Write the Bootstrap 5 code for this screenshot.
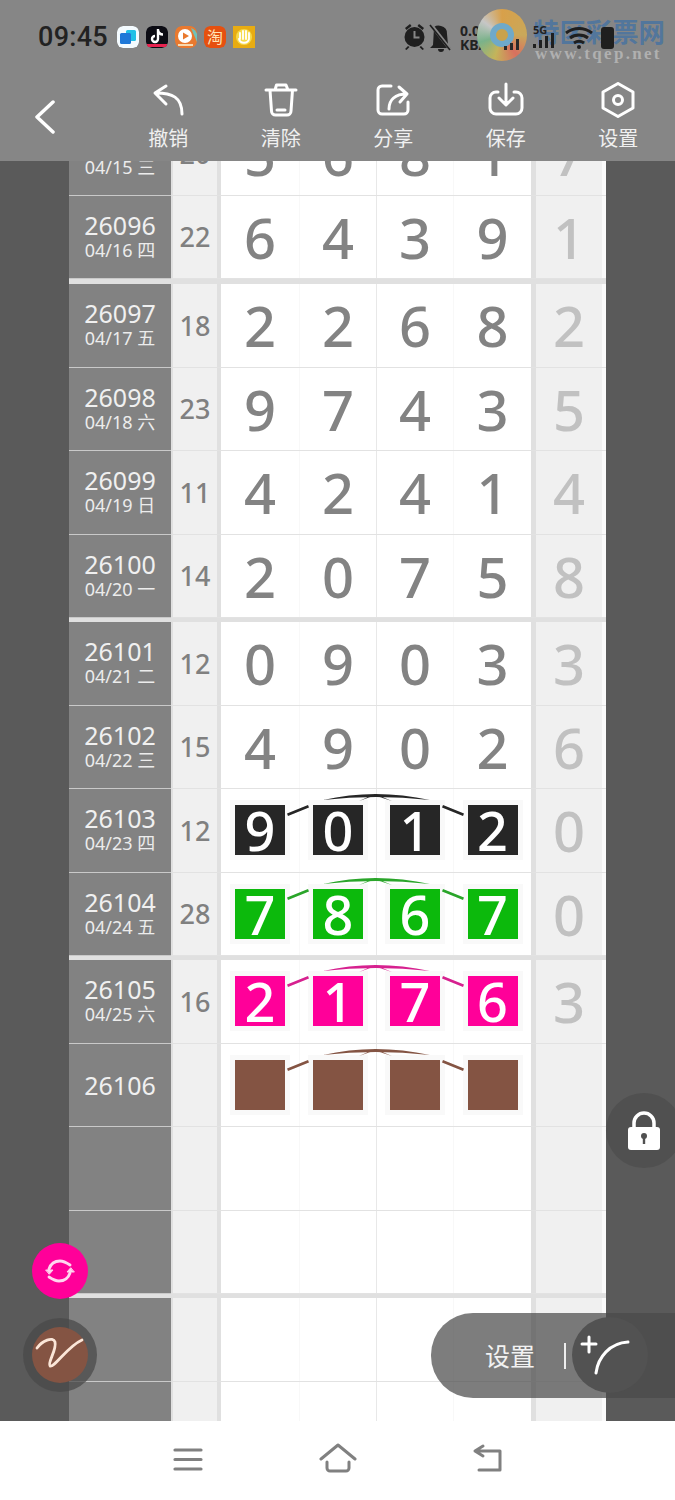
<!DOCTYPE html>
<html lang="zh-CN">
<head>
<meta charset="utf-8">
<link href="https://cdn.jsdelivr.net/npm/bootstrap@5.3.0/dist/css/bootstrap.min.css" rel="stylesheet">
<style>
html,body{margin:0;background:#fff}
.pg{width:675px;height:1500px;font-family:"Noto Sans","Noto Sans CJK SC",sans-serif;overflow:hidden}
.hdr{height:161px;background:#868686}
.st{height:74px;padding-left:38px}
.clock{font-family:Roboto,sans-serif;font-weight:500;font-size:27px;letter-spacing:.3px;color:#222;width:79px}
.apps{gap:7px}
.app{width:22px;height:22px;border-radius:6px;display:block}
.ric{left:403px;top:22px;width:214px;height:30px}
.rate{left:460px;top:24px;font:700 14px/14px "Noto Sans",sans-serif;color:#222;text-align:left}
.five{left:533px;top:24px;font:700 11px/12px "Noto Sans",sans-serif;color:#222}
.logo{left:477px;top:9px;width:50px;height:52px;border-radius:50%;background:conic-gradient(#d8a04a,#c9a85a 25%,#d8705e 40%,#c4b45a 55%,#7ab28a 70%,#c6c6c6 85%,#d8a04a);filter:blur(.6px)}
.logo::after{content:"";position:absolute;left:13px;top:14px;width:24px;height:24px;border-radius:50%;border:6px solid #6fa9c9;background:#c9a24b}
.gb{left:503px;top:38px;width:20px;height:12px}
.wm{left:533px;top:13px;font:700 26.4px/36px "Noto Sans CJK SC",sans-serif;color:rgba(62,112,165,.72);white-space:nowrap}
.wu{left:535px;top:44px;font:700 17px/20px "Liberation Serif",serif;color:rgba(205,205,205,.6);letter-spacing:2.3px;white-space:nowrap}
.nv{height:87px;padding-top:8px}
.bk{width:112px;padding-left:33px;padding-top:18px}
.ni{width:112.5px}
.ni svg,.bk svg{display:block}
.nl{font:400 20px/24px "Noto Sans CJK SC",sans-serif;color:#f0f0f0;margin-top:8px}
.bd{height:1260px;background:#5a5a5a;padding:0 69px}
.lr{height:83.5px;border-bottom:1px solid #e2e2e2}
.lg{border-bottom:4.5px solid #e0e0e0}
.first{margin-top:-48px;border-bottom-width:5.5px}
.first .lr{height:83px}
.cid{width:102px;background:#828282;color:#f0f0f0;border-bottom:1px solid #c9c9c9;margin-bottom:-1px}
.cno{font-size:25px;line-height:30px;margin-top:-2px}
.cno:only-child{margin-top:0}
.cdt{font-size:18px;line-height:24px;margin-top:-2px;color:#ececec}
.csm{width:50px;padding-top:1px;background:#f0f0f0;border-left:2px solid #e0e0e0;border-right:4px solid #e0e0e0;color:#808080;font-size:27px;font-weight:500}
.cds{width:310px;background:#fff}
.cd{width:77px;font-size:56px;font-weight:500;line-height:1;color:#838383;border-right:1px solid #f8f8f8}
.cd:first-child{width:79px}
.cd:nth-child(2){border-right-color:#e8e8e8}
.cd:nth-child(4){border-right:0}
.cla{width:75px;background:#f0f0f0;border-left:5px solid #e0e0e0;border-right:4px solid #fafafa;color:#c1c1c1;font-size:56px;font-weight:500;line-height:1}
.tile{width:50px;height:50px;color:#fff;font-size:54px;font-weight:500;line-height:50px;box-shadow:0 0 0 5px #f9f9f9}
.tk{background:#262626}.tg{background:#0cb90c}.tp{background:#ff0099}.tb{background:#845443}
.arc{left:0;top:0;width:310px;height:83px;pointer-events:none}
.botm{height:79px;background:#fff}
.bi{width:150px;padding-top:22px}
.lock{left:606px;top:1093px;width:76px;height:75px;border-radius:50%;background:#505050}
.ref{left:32px;top:1243px;width:56px;height:56px;border-radius:50%;background:#ff0099}
.sig{left:23px;top:1318px;width:74px;height:74px;border-radius:50%;background:rgba(73,73,73,.75)}
.sigi{width:56px;height:56px;border-radius:50%;background:#845443}
.pill{left:431px;top:1313px;width:244px;height:85px;border-radius:42px 0 0 42px;background:rgba(73,73,73,.715);padding-left:54px;color:#f2f2f2;font:400 25px/1 "Noto Sans CJK SC",sans-serif}
.dv{width:2px;height:26px;background:#eee;margin-left:29px}
.pc{left:141px;top:4px;width:76px;height:76px;border-radius:50%;background:#525252}
</style>
</head>
<body>
<div class="pg position-relative">
 <div class="hdr position-relative">
  <div class="st d-flex align-items-center">
   <div class="clock">09:45</div>
   <div class="apps d-flex">
    <svg class="app" viewBox="0 0 22 22"><rect width="22" height="22" rx="6" fill="#f4fbff"/><rect x="9" y="4" width="10" height="11" rx="1.5" fill="#21c0e6"/><rect x="3" y="7" width="11" height="11" rx="1.5" fill="#1e78d8"/></svg>
    <svg class="app" viewBox="0 0 22 22"><rect width="22" height="22" rx="6" fill="#0c0c14"/><path d="M12 3v10a3 3 0 1 1-3-3M12 4c.5 3 2.500 4.500 5 4.500" fill="none" stroke="#fff" stroke-width="2.400"/><rect x="1" y="18" width="20" height="3" fill="#e8224f"/></svg>
    <svg class="app" viewBox="0 0 22 22"><rect width="22" height="22" rx="7" fill="#e9792f"/><path d="M16 2a9 9 0 0 1 6 6v8z" fill="#6fc2ba"/><circle cx="10" cy="10" r="7" fill="#fff"/><path d="M8 6.500l6 3.500-6 3.500z" fill="#e9792f"/><rect x="3" y="18" width="15" height="2" fill="#f7d9b0"/></svg>
    <svg class="app" viewBox="0 0 22 22"><rect width="22" height="22" rx="6" fill="#e6500f"/><text x="11" y="17" text-anchor="middle" font-family="Noto Sans CJK SC" font-size="16" fill="#ffe3b5">淘</text></svg>
    <svg class="app" style="border-radius:0" viewBox="0 0 22 22"><rect width="22" height="22" fill="#e8ac12"/><circle cx="11" cy="11" r="8" fill="#f6d94a"/><path d="M7 7v6M10 5v8M13 5v8M16 7v6M6 13c1 5 9 5 10 0" fill="none" stroke="#fff" stroke-width="1.800" stroke-linecap="round"/></svg>
   </div>
  </div>
  <div class="rate position-absolute">0.01<br>KB/s</div>
  <div class="logo position-absolute"></div>
  <svg class="gb position-absolute" viewBox="0 0 20 12" fill="#2a2a2a"><rect x="1" y="8" width="3" height="4"/><rect x="7" y="5" width="3" height="7"/><rect x="13" y="1" width="3" height="11"/></svg>
  <div class="wm position-absolute">特区彩票网</div>
  <div class="wu position-absolute">www.tqep.net</div>
  <svg class="ric position-absolute" viewBox="0 0 214 30">
   <g fill="#1f1f1f">
    <circle cx="11.500" cy="15" r="10"/><path d="M2 6l5-4 1.500 2-5 4zM21 6l-5-4-1.500 2 5 4zM5 24l-3 3 1.500 1 3-3zM18 24l3 3-1.500 1-3-3z"/>
    <path d="M31 5a8 8 0 0 1 7-1 7 7 0 0 1 6 8l1 11 3 3H27l3-3 .5-8zM35 27h6a3 3 0 0 1-6 0z"/>
    <rect x="130" y="22" width="3" height="4"/><rect x="136" y="18" width="3" height="8"/><rect x="142" y="14" width="3" height="12"/><rect x="148" y="11" width="3" height="15"/>
    <rect x="198" y="5" width="13" height="22" rx="3"/>
   </g>
   <path d="M29 4l18 23" stroke="#868686" stroke-width="3.500"/><path d="M27 3l20 25" stroke="#1f1f1f" stroke-width="1.600"/>
   <path d="M163 11c8-6 18-6 26 0M167 16c5-4 13-4 18 0M171 21c3-2 7-2 10 0" fill="none" stroke="#1f1f1f" stroke-width="3"/><circle cx="176" cy="25" r="2" fill="#1f1f1f"/>
   <path d="M11.500 9v6.500h5" fill="none" stroke="#868686" stroke-width="2"/>
  </svg>
  <div class="five position-absolute">5G</div>
  <div class="nv d-flex">
   <div class="bk"><svg width="24" height="36" viewBox="0 0 24 36" fill="none" stroke="#fff" stroke-width="3.500" stroke-linecap="round" stroke-linejoin="round"><path d="M20 2 4 17l16 15"/></svg></div>
   <div class="ni d-flex flex-column align-items-center"><svg width="36" height="36" viewBox="0 0 36 36" fill="none" stroke="#fff" stroke-width="3" stroke-linecap="round" stroke-linejoin="round"><path d="M16 4 5 11l11 11M6 11c16 0 26 4 26 21"/></svg><div class="nl">撤销</div></div>
   <div class="ni d-flex flex-column align-items-center"><svg width="36" height="36" viewBox="0 0 36 36" fill="none" stroke="#fff" stroke-width="3" stroke-linecap="round" stroke-linejoin="round"><path d="M3 8h30M12 8l1.500-5H23l2 5M7 8l1.500 21a4 4 0 0 0 4 4H24a4 4 0 0 0 4-4l1.500-21M14 28h8"/></svg><div class="nl">清除</div></div>
   <div class="ni d-flex flex-column align-items-center"><svg width="36" height="36" viewBox="0 0 36 36" fill="none" stroke="#fff" stroke-width="3" stroke-linecap="round" stroke-linejoin="round"><path d="M16 4H7a4 4 0 0 0-4 4v20a4 4 0 0 0 4 4h22a4 4 0 0 0 4-4v-8M14 27c0-9 6-15 18-15M24 5l8 7-7 8"/></svg><div class="nl">分享</div></div>
   <div class="ni d-flex flex-column align-items-center"><svg width="36" height="36" viewBox="0 0 36 36" fill="none" stroke="#fff" stroke-width="3" stroke-linecap="round" stroke-linejoin="round"><path d="M10 10H8a6 6 0 0 0-6 6v10a6 6 0 0 0 6 6h20a6 6 0 0 0 6-6V16a6 6 0 0 0-6-6h-2M18 2v20M11 16l7 7 7-7"/></svg><div class="nl">保存</div></div>
   <div class="ni d-flex flex-column align-items-center"><svg width="36" height="36" viewBox="0 0 36 36" fill="none" stroke="#fff" stroke-width="3" stroke-linecap="round" stroke-linejoin="round"><path d="M18 1.500 33 10v16l-15 8.500L3 26V10z"/><circle cx="18" cy="18" r="4.500"/></svg><div class="nl">设置</div></div>
  </div>
 </div>

 <div class="bd overflow-hidden">
  <div class="lg first">
   <div class="lr d-flex"><div class="cid d-flex flex-column align-items-center justify-content-center"><span class="cno">26095</span><span class="cdt">04/15 三</span></div><div class="csm d-flex align-items-center justify-content-center">20</div><div class="cds d-flex"><div class="cd d-flex align-items-center justify-content-center">5</div><div class="cd d-flex align-items-center justify-content-center">6</div><div class="cd d-flex align-items-center justify-content-center">8</div><div class="cd d-flex align-items-center justify-content-center">1</div></div><div class="cla d-flex align-items-center justify-content-center">7</div></div>
   <div class="lr d-flex"><div class="cid d-flex flex-column align-items-center justify-content-center"><span class="cno">26096</span><span class="cdt">04/16 四</span></div><div class="csm d-flex align-items-center justify-content-center">22</div><div class="cds d-flex"><div class="cd d-flex align-items-center justify-content-center">6</div><div class="cd d-flex align-items-center justify-content-center">4</div><div class="cd d-flex align-items-center justify-content-center">3</div><div class="cd d-flex align-items-center justify-content-center">9</div></div><div class="cla d-flex align-items-center justify-content-center">1</div></div>
  </div>
  <div class="lg">
   <div class="lr d-flex"><div class="cid d-flex flex-column align-items-center justify-content-center"><span class="cno">26097</span><span class="cdt">04/17 五</span></div><div class="csm d-flex align-items-center justify-content-center">18</div><div class="cds d-flex"><div class="cd d-flex align-items-center justify-content-center">2</div><div class="cd d-flex align-items-center justify-content-center">2</div><div class="cd d-flex align-items-center justify-content-center">6</div><div class="cd d-flex align-items-center justify-content-center">8</div></div><div class="cla d-flex align-items-center justify-content-center">2</div></div>
   <div class="lr d-flex"><div class="cid d-flex flex-column align-items-center justify-content-center"><span class="cno">26098</span><span class="cdt">04/18 六</span></div><div class="csm d-flex align-items-center justify-content-center">23</div><div class="cds d-flex"><div class="cd d-flex align-items-center justify-content-center">9</div><div class="cd d-flex align-items-center justify-content-center">7</div><div class="cd d-flex align-items-center justify-content-center">4</div><div class="cd d-flex align-items-center justify-content-center">3</div></div><div class="cla d-flex align-items-center justify-content-center">5</div></div>
   <div class="lr d-flex"><div class="cid d-flex flex-column align-items-center justify-content-center"><span class="cno">26099</span><span class="cdt">04/19 日</span></div><div class="csm d-flex align-items-center justify-content-center">11</div><div class="cds d-flex"><div class="cd d-flex align-items-center justify-content-center">4</div><div class="cd d-flex align-items-center justify-content-center">2</div><div class="cd d-flex align-items-center justify-content-center">4</div><div class="cd d-flex align-items-center justify-content-center">1</div></div><div class="cla d-flex align-items-center justify-content-center">4</div></div>
   <div class="lr d-flex"><div class="cid d-flex flex-column align-items-center justify-content-center"><span class="cno">26100</span><span class="cdt">04/20 一</span></div><div class="csm d-flex align-items-center justify-content-center">14</div><div class="cds d-flex"><div class="cd d-flex align-items-center justify-content-center">2</div><div class="cd d-flex align-items-center justify-content-center">0</div><div class="cd d-flex align-items-center justify-content-center">7</div><div class="cd d-flex align-items-center justify-content-center">5</div></div><div class="cla d-flex align-items-center justify-content-center">8</div></div>
  </div>
  <div class="lg">
   <div class="lr d-flex"><div class="cid d-flex flex-column align-items-center justify-content-center"><span class="cno">26101</span><span class="cdt">04/21 二</span></div><div class="csm d-flex align-items-center justify-content-center">12</div><div class="cds d-flex"><div class="cd d-flex align-items-center justify-content-center">0</div><div class="cd d-flex align-items-center justify-content-center">9</div><div class="cd d-flex align-items-center justify-content-center">0</div><div class="cd d-flex align-items-center justify-content-center">3</div></div><div class="cla d-flex align-items-center justify-content-center">3</div></div>
   <div class="lr d-flex"><div class="cid d-flex flex-column align-items-center justify-content-center"><span class="cno">26102</span><span class="cdt">04/22 三</span></div><div class="csm d-flex align-items-center justify-content-center">15</div><div class="cds d-flex"><div class="cd d-flex align-items-center justify-content-center">4</div><div class="cd d-flex align-items-center justify-content-center">9</div><div class="cd d-flex align-items-center justify-content-center">0</div><div class="cd d-flex align-items-center justify-content-center">2</div></div><div class="cla d-flex align-items-center justify-content-center">6</div></div>
   <div class="lr d-flex"><div class="cid d-flex flex-column align-items-center justify-content-center"><span class="cno">26103</span><span class="cdt">04/23 四</span></div><div class="csm d-flex align-items-center justify-content-center">12</div><div class="cds d-flex position-relative"><div class="cd d-flex align-items-center justify-content-center"><div class="tile tk text-center">9</div></div><div class="cd d-flex align-items-center justify-content-center"><div class="tile tk text-center">0</div></div><div class="cd d-flex align-items-center justify-content-center"><div class="tile tk text-center">1</div></div><div class="cd d-flex align-items-center justify-content-center"><div class="tile tk text-center">2</div></div><svg class="arc position-absolute" viewBox="0 0 310 83" fill="#262626" stroke="none"><path d="M66 24.500 87 16l1 2.500-21 8.500zM222 16l21 8.500-1 2.500-21-8.500zM102 11Q154-1 209 11Q154 5 102 11zM138 12l16-7 17 7-11-3.500-6-1-6 1z"/></svg></div><div class="cla d-flex align-items-center justify-content-center">0</div></div>
   <div class="lr d-flex"><div class="cid d-flex flex-column align-items-center justify-content-center"><span class="cno">26104</span><span class="cdt">04/24 五</span></div><div class="csm d-flex align-items-center justify-content-center">28</div><div class="cds d-flex position-relative"><div class="cd d-flex align-items-center justify-content-center"><div class="tile tg text-center">7</div></div><div class="cd d-flex align-items-center justify-content-center"><div class="tile tg text-center">8</div></div><div class="cd d-flex align-items-center justify-content-center"><div class="tile tg text-center">6</div></div><div class="cd d-flex align-items-center justify-content-center"><div class="tile tg text-center">7</div></div><svg class="arc position-absolute" viewBox="0 0 310 83" fill="#2aa52a" stroke="none"><path d="M66 24.500 87 16l1 2.500-21 8.500zM222 16l21 8.500-1 2.500-21-8.500zM102 11Q154-1 209 11Q154 5 102 11zM138 12l16-7 17 7-11-3.500-6-1-6 1z"/></svg></div><div class="cla d-flex align-items-center justify-content-center">0</div></div>
  </div>
  <div class="lg">
   <div class="lr d-flex"><div class="cid d-flex flex-column align-items-center justify-content-center"><span class="cno">26105</span><span class="cdt">04/25 六</span></div><div class="csm d-flex align-items-center justify-content-center">16</div><div class="cds d-flex position-relative"><div class="cd d-flex align-items-center justify-content-center"><div class="tile tp text-center">2</div></div><div class="cd d-flex align-items-center justify-content-center"><div class="tile tp text-center">1</div></div><div class="cd d-flex align-items-center justify-content-center"><div class="tile tp text-center">7</div></div><div class="cd d-flex align-items-center justify-content-center"><div class="tile tp text-center">6</div></div><svg class="arc position-absolute" viewBox="0 0 310 83" fill="#d6218f" stroke="none"><path d="M66 24.500 87 16l1 2.500-21 8.500zM222 16l21 8.500-1 2.500-21-8.500zM102 11Q154-1 209 11Q154 5 102 11zM138 12l16-7 17 7-11-3.500-6-1-6 1z"/></svg></div><div class="cla d-flex align-items-center justify-content-center">3</div></div>
   <div class="lr d-flex"><div class="cid d-flex flex-column align-items-center justify-content-center"><span class="cno">26106</span></div><div class="csm"></div><div class="cds d-flex position-relative"><div class="cd d-flex align-items-center justify-content-center"><div class="tile tb"></div></div><div class="cd d-flex align-items-center justify-content-center"><div class="tile tb"></div></div><div class="cd d-flex align-items-center justify-content-center"><div class="tile tb"></div></div><div class="cd d-flex align-items-center justify-content-center"><div class="tile tb"></div></div><svg class="arc position-absolute" viewBox="0 0 310 83" fill="#845443" stroke="none"><path d="M66 24.500 87 16l1 2.500-21 8.500zM222 16l21 8.500-1 2.500-21-8.500zM102 11Q154-1 209 11Q154 5 102 11zM138 12l16-7 17 7-11-3.500-6-1-6 1z"/></svg></div><div class="cla"></div></div>
   <div class="lr d-flex"><div class="cid"></div><div class="csm"></div><div class="cds d-flex"><div class="cd"></div><div class="cd"></div><div class="cd"></div><div class="cd"></div></div><div class="cla"></div></div>
   <div class="lr d-flex"><div class="cid"></div><div class="csm"></div><div class="cds d-flex"><div class="cd"></div><div class="cd"></div><div class="cd"></div><div class="cd"></div></div><div class="cla"></div></div>
  </div>
  <div>
   <div class="lr d-flex"><div class="cid"></div><div class="csm"></div><div class="cds d-flex"><div class="cd"></div><div class="cd"></div><div class="cd"></div><div class="cd"></div></div><div class="cla"></div></div>
   <div class="lr d-flex"><div class="cid"></div><div class="csm"></div><div class="cds d-flex"><div class="cd"></div><div class="cd"></div><div class="cd"></div><div class="cd"></div></div><div class="cla"></div></div>
  </div>
 </div>

 <div class="botm d-flex justify-content-center">
  <div class="bi d-flex justify-content-center"><svg width="30" height="28" viewBox="0 0 30 28" fill="none" stroke="#808080" stroke-width="3.200" stroke-linecap="round"><path d="M2 7h26M2 16.500h26M2 26h26"/></svg></div>
  <div class="bi d-flex justify-content-center"><svg width="38" height="32" viewBox="0 0 38 32" fill="none" stroke="#808080" stroke-width="3" stroke-linecap="round" stroke-linejoin="round"><path d="M2 16 19 2l17 14M8 19v6a3 3 0 0 0 3 3h16a3 3 0 0 0 3-3v-6"/></svg></div>
  <div class="bi d-flex justify-content-center"><svg width="32" height="30" viewBox="0 0 32 30" fill="none" stroke="#808080" stroke-width="3" stroke-linecap="round" stroke-linejoin="round"><path d="M3 8h25v19H7M11 3 3 8l8 5"/></svg></div>
 </div>

 <div class="lock position-absolute d-flex align-items-center justify-content-center"><svg width="40" height="42" viewBox="0 0 40 42"><path d="M10 19v-6a10 10 0 0 1 20 0v6" fill="none" stroke="#fff" stroke-width="3.500"/><rect x="4" y="17" width="32" height="23" rx="3" fill="#fff"/><circle cx="20" cy="26" r="3" fill="#505050"/><rect x="18.800" y="27" width="2.400" height="7" fill="#505050"/></svg></div>
 <div class="ref position-absolute d-flex align-items-center justify-content-center"><svg width="34" height="34" viewBox="0 0 34 34" fill="none" stroke="#ffd6ef" stroke-width="2.800" stroke-linecap="round"><path d="M6 15c2-6 6-8 11-8 4 0 7 2 10 4M27 19c-2 6-6 8-11 8-4 0-7-2-10-4"/><path fill="#ffd6ef" d="M3 16h7l-3.500 4zM31 18h-7l3.500-4z" stroke-width="1"/></svg></div>
 <div class="sig position-absolute d-flex align-items-center justify-content-center"><div class="sigi d-flex align-items-center justify-content-center"><svg width="52" height="52" viewBox="0 0 52 52" fill="none" stroke="#fbe6d8" stroke-width="2.800" stroke-linecap="round" stroke-linejoin="round"><path d="M3 19C8 12 19 7 21 13 23 21 13 34 16 37 20 39 34 17 48 11"/></svg></div></div>
 <div class="pill position-absolute d-flex align-items-center"><span>设置</span><span class="dv"></span>
  <div class="pc position-absolute"><svg class="d-block" width="76" height="76" viewBox="0 0 76 76" fill="none" stroke="#fff" stroke-width="3" stroke-linecap="round"><path d="M17 20V35M10 27H24M24 56C26 40 38 26 56 25"/></svg></div>
 </div>
</div>
</body>
</html>
